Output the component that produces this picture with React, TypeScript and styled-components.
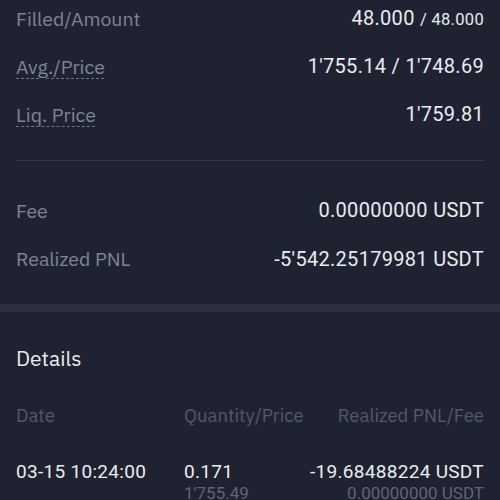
import styled, { createGlobalStyle } from "styled-components";

const GlobalStyle = createGlobalStyle`
  html, body {
    margin: 0;
    padding: 0;
    background: #1f2331;
  }
  body {
    width: 500px;
    height: 500px;
    overflow: hidden;
  }
`;

const Page = styled.div`
  width: 500px;
  height: 500px;
  overflow: hidden;
  background: #1f2331;
  font-family: "IBM Plex Sans", "Noto Sans", sans-serif;
`;

const Section = styled.div<{ $shift?: number; $bottom?: number }>`
  padding: 0 16px ${(p) => p.$bottom ?? 0}px;
  margin-top: ${(p) => p.$shift ?? 0}px;
`;

const Row = styled.div<{ $h?: number }>`
  height: ${(p) => p.$h ?? 48}px;
  display: flex;
  align-items: center;
  justify-content: space-between;
`;

const Label = styled.span<{ $dotted?: boolean }>`
  font-size: 19.5px;
  color: #7d8594;
  ${(p) =>
    p.$dotted &&
    `
    text-decoration: underline dashed #6d7482;
    text-decoration-thickness: 1px;
    text-underline-offset: 4px;
  `}
`;

const Value = styled.span`
  font-family: "Roboto", "DejaVu Sans", sans-serif;
  font-size: 20px;
  color: #eaecef;
  letter-spacing: 0.3px;
`;

const Small = styled.span`
  font-size: 16.5px;
`;

const Divider = styled.div`
  height: 1px;
  margin-top: 22px;
  background: #353a47;
`;

const Band = styled.div`
  height: 8px;
  background: #2b303e;
`;

const Title = styled.div`
  height: 92px;
  display: flex;
  align-items: center;
  padding: 0 16px;
  font-size: 21px;
  color: #eaecef;
`;

const Grid = styled.div`
  display: grid;
  grid-template-columns: 168px 1fr auto;
  padding: 0 16px;
`;

const Head = styled.div<{ $right?: boolean }>`
  height: 22px;
  display: flex;
  align-items: center;
  justify-content: ${(p) => (p.$right ? "flex-end" : "flex-start")};
  font-size: 18.5px;
  color: #525968;
`;

const Cell = styled.div<{ $right?: boolean }>`
  display: flex;
  flex-direction: column;
  align-items: ${(p) => (p.$right ? "flex-end" : "flex-start")};
  padding-top: 35px;
  gap: 0;
`;

const Main = styled.span`
  font-family: "Roboto", "DejaVu Sans", sans-serif;
  font-size: 19px;
  color: #eaecef;
  line-height: 22px;
  letter-spacing: 0.3px;
`;

const Sub = styled.span`
  font-family: "Roboto", "DejaVu Sans", sans-serif;
  font-size: 17px;
  color: #5e6574;
  line-height: 20px;
`;

export default function App() {
  return (
    <Page>
      <GlobalStyle />
      <Section $shift={-6}>
        <Row>
          <Label>Filled/Amount</Label>
          <Value>
            48.000 <Small>/ 48.000</Small>
          </Value>
        </Row>
        <Row>
          <Label $dotted>Avg./Price</Label>
          <Value>1'755.14 / 1'748.69</Value>
        </Row>
        <Row>
          <Label $dotted>Liq. Price</Label>
          <Value>1'759.81</Value>
        </Row>
        <Divider />
      </Section>
      <Section>
        <Row $h={25} />
        <Row>
          <Label>Fee</Label>
          <Value>0.00000000 USDT</Value>
        </Row>
        <Row $h={49}>
          <Label>Realized PNL</Label>
          <Value>-5'542.25179981 USDT</Value>
        </Row>
        <Row $h={21} />
      </Section>
      <Band />
      <Title>Details</Title>
      <Grid>
        <Head>Date</Head>
        <Head>Quantity/Price</Head>
        <Head $right>Realized PNL/Fee</Head>
        <Cell>
          <Main>03-15 10:24:00</Main>
        </Cell>
        <Cell>
          <Main>0.171</Main>
          <Sub>1'755.49</Sub>
        </Cell>
        <Cell $right>
          <Main>-19.68488224 USDT</Main>
          <Sub>0.00000000 USDT</Sub>
        </Cell>
      </Grid>
    </Page>
  );
}
